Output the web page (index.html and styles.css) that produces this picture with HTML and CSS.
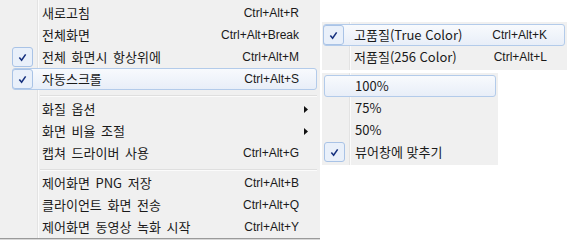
FILE: index.html
```html
<!DOCTYPE html>
<html lang="ko">
<head>
  <meta charset="UTF-8">
  <title>메뉴</title>
  <link rel="stylesheet" href="styles.css">
</head>
<body>
  <div class="screen">
    <div class="menu main">
      <div class="item"><span class="check"></span><span class="label">새로고침</span><span class="key">Ctrl+Alt+R</span></div>
      <div class="item"><span class="check"></span><span class="label">전체화면</span><span class="key">Ctrl+Alt+Break</span></div>
      <div class="item"><span class="check on"><svg viewBox="0 0 10 10"><polyline points="1.5,5 4,8 8.5,1.5"/></svg></span><span class="label">전체 화면시 항상위에</span><span class="key">Ctrl+Alt+M</span></div>
      <div class="item hover"><span class="check"><svg viewBox="0 0 10 10"><polyline points="1.5,5 4,8 8.5,1.5"/></svg></span><span class="label">자동스크롤</span><span class="key">Ctrl+Alt+S</span></div>
      <div class="sep"></div>
      <div class="item sub"><span class="check"></span><span class="label">화질 옵션</span><span class="arrow"><svg viewBox="0 0 4 7"><polygon points="0,0 4,3.5 0,7"/></svg></span></div>
      <div class="item sub"><span class="check"></span><span class="label">화면 비율 조절</span><span class="arrow"><svg viewBox="0 0 4 7"><polygon points="0,0 4,3.5 0,7"/></svg></span></div>
      <div class="item"><span class="check"></span><span class="label">캡쳐 드라이버 사용</span><span class="key">Ctrl+Alt+G</span></div>
      <div class="sep"></div>
      <div class="item"><span class="check"></span><span class="label">제어화면 PNG 저장</span><span class="key">Ctrl+Alt+B</span></div>
      <div class="item"><span class="check"></span><span class="label">클라이언트 화면 전송</span><span class="key">Ctrl+Alt+Q</span></div>
      <div class="item"><span class="check"></span><span class="label">제어화면 동영상 녹화 시작</span><span class="key">Ctrl+Alt+Y</span></div>
    </div>

    <div class="subs">
      <div class="menu quality">
        <div class="item hover"><span class="check"><svg viewBox="0 0 10 10"><polyline points="1.5,5 4,8 8.5,1.5"/></svg></span><span class="label">고품질(True Color)</span><span class="key">Ctrl+Alt+K</span></div>
        <div class="item"><span class="check"></span><span class="label">저품질(256 Color)</span><span class="key">Ctrl+Alt+L</span></div>
      </div>
      <div class="menu ratio">
        <div class="item hover"><span class="check"></span><span class="label">100%</span></div>
        <div class="item"><span class="check"></span><span class="label">75%</span></div>
        <div class="item"><span class="check"></span><span class="label">50%</span></div>
        <div class="item"><span class="check on"><svg viewBox="0 0 10 10"><polyline points="1.5,5 4,8 8.5,1.5"/></svg></span><span class="label">뷰어창에 맞추기</span></div>
      </div>
    </div>
  </div>
</body>
</html>
```

FILE: styles.css
```css
  body {
    margin: 0;
    background: #fff;
    font-family: "Liberation Sans", "Noto Sans CJK KR", sans-serif;
    font-size: 12px;
    color: #1a1a1a;
  }
  .screen {
    display: flex;
    align-items: flex-start;
    width: 569px;
    height: 242px;
  }
  .menu {
    box-sizing: border-box;
    background: #f0f0f0;
  }
  .menu.main {
    width: 320px;
    padding: 2px 3px 0 12px;
    border-bottom: 1px solid #9a9a9a;
    box-shadow: 0 1px 0 #d8d8d8;
    background: linear-gradient(to right, #f0f0f0 37px, #e3e3e3 37px, #e3e3e3 38px, #fbfbfb 38px, #fbfbfb 39px, #f0f0f0 39px);
  }
  .subs {
    display: flex;
    flex-direction: column;
    gap: 3px;
    margin: 22px 0 0 2px;
  }
  .menu.quality {
    width: 245px;
    padding: 2px 2px 2px 1px;
    background: linear-gradient(to right, #f0f0f0 27px, #e3e3e3 27px, #e3e3e3 28px, #fbfbfb 28px, #fbfbfb 29px, #f0f0f0 29px);
  }
  .menu.ratio {
    width: 176px;
    padding: 2px 2px 2px 2px;
    background: linear-gradient(to right, #f0f0f0 27px, #e3e3e3 27px, #e3e3e3 28px, #fbfbfb 28px, #fbfbfb 29px, #f0f0f0 29px);
  }
  .item {
    display: flex;
    align-items: center;
    box-sizing: border-box;
    height: 22px;
    border: 1px solid transparent;
    border-radius: 3px;
    padding-right: 17px;
    line-height: 20px;
    white-space: nowrap;
  }
  .item.sub {
    padding-right: 8px;
  }
  .item.hover {
    border-color: #b3cbea;
    background: linear-gradient(#f8fafd, #e8eef8);
  }
  .check {
    display: flex;
    align-items: center;
    justify-content: center;
    box-sizing: border-box;
    width: 21px;
    height: 20px;
    margin-left: -1px;
    border: 1px solid transparent;
    border-radius: 3px;
  }
  .check.on,
  .item.hover .check:has(svg) {
    border-color: #a9c3e6;
    background: #e9f0fa;
  }
  .check svg {
    width: 9px;
    height: 9px;
    fill: none;
    stroke: #15307e;
    stroke-width: 1.7;
  }
  .label {
    padding-left: 9px;
    font-family: "Noto Sans CJK KR", "Liberation Sans", sans-serif;
    font-size: 13px;
    word-spacing: 2px;
  }
  .quality .label,
  .ratio .label {
    padding-left: 10px;
    word-spacing: 0;
  }
  .key {
    margin-left: auto;
  }
  .arrow {
    margin-left: auto;
    display: flex;
  }
  .arrow svg {
    width: 4px;
    height: 7px;
    fill: #111;
  }
  .sep {
    height: 8px;
    margin-left: 28px;
    background: linear-gradient(#f0f0f0 5px, #dfdfdf 5px, #dfdfdf 6px, #fbfbfb 6px, #fbfbfb 7px, #f0f0f0 7px);
  }
```
